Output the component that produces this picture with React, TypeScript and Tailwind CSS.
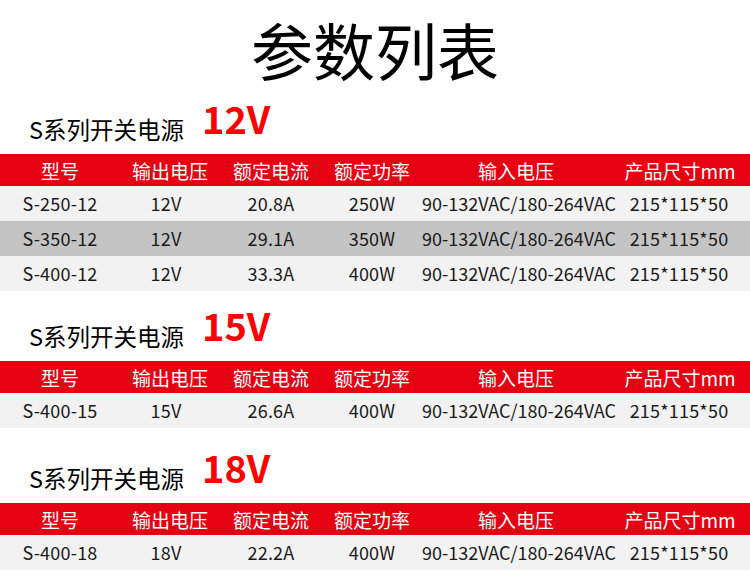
const cols = "grid grid-cols-[120px_100px_102px_100px_188px_140px]"

const headers = ["型号", "输出电压", "额定电流", "额定功率", "输入电压", "产品尺寸mm"]

type Row = { model: string; volt: string; amp: string; watt: string; gray?: boolean }

const sections: { v: string; top: string; rows: Row[] }[] = [
  {
    v: "12V",
    top: "h-[54px]",
    rows: [
      { model: "S-250-12", volt: "12V", amp: "20.8A", watt: "250W" },
      { model: "S-350-12", volt: "12V", amp: "29.1A", watt: "350W", gray: true },
      { model: "S-400-12", volt: "12V", amp: "33.3A", watt: "400W" },
    ],
  },
  { v: "15V", top: "h-[70px]", rows: [{ model: "S-400-15", volt: "15V", amp: "26.6A", watt: "400W" }] },
  { v: "18V", top: "h-[75px]", rows: [{ model: "S-400-18", volt: "18V", amp: "22.2A", watt: "400W" }] },
]

const Section = ({ v, top, rows }: { v: string; top: string; rows: Row[] }) => (
  <div>
    <div className={`flex items-end pl-[29px] ${top}`}>
      <span className="text-[23.5px] leading-none text-black pb-[13px]">S系列开关电源</span>
      <span className="text-[38px] leading-none font-bold text-[#ff0000] ml-[18px] pb-[17px]">{v}</span>
    </div>
    <div className={`${cols} h-[32px] bg-[#e50012] text-white text-[19px] items-center text-center`}>
      {headers.map((h) => (
        <div key={h} className="leading-none">{h}</div>
      ))}
    </div>
    {rows.map((r) => (
      <div
        key={r.model}
        className={`${cols} h-[35px] items-center text-center text-[18px] tracking-[0.2px] text-[#1a1a1a] ${r.gray ? "bg-[#c4c4c4]" : "bg-[#f2f2f2]"}`}
      >
        <div>{r.model}</div>
        <div className="pr-[8px]">{r.volt}</div>
        <div>{r.amp}</div>
        <div>{r.watt}</div>
        <div className="whitespace-nowrap tracking-normal pr-[2px]">90-132VAC/180-264VAC</div>
        <div className="pr-[2px]">215*115*50</div>
      </div>
    ))}
  </div>
)

export default function App() {
  return (
    <div className="w-[750px] h-[578px] bg-white overflow-hidden font-['Noto_Sans_CJK_SC',sans-serif]">
      <div className="h-[100px] flex items-center justify-center pb-[2px]">
        <h1 className="text-[62px] leading-none text-black">参数列表</h1>
      </div>
      {sections.map((s) => (
        <Section key={s.v} {...s} />
      ))}
    </div>
  )
}
